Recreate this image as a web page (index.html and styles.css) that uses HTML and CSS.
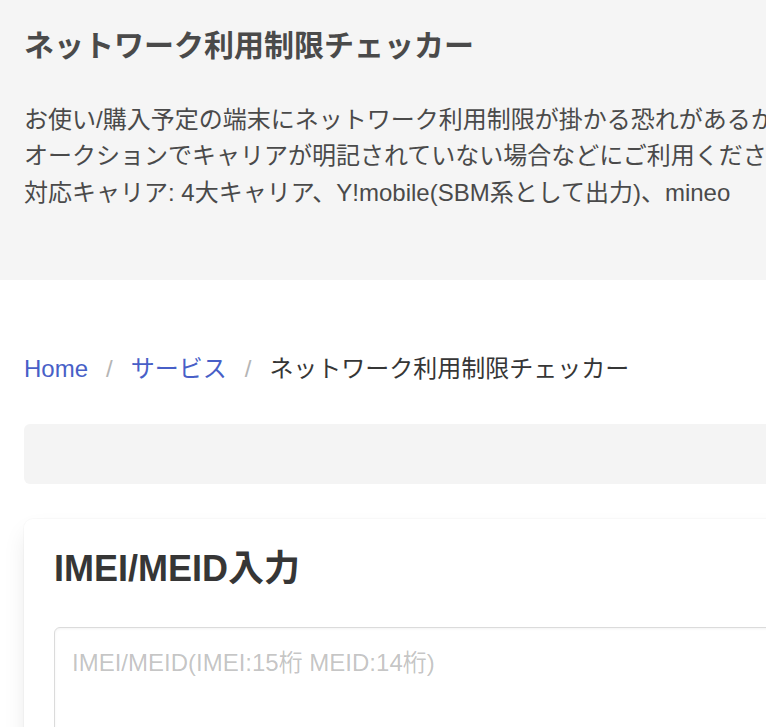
FILE: index.html
```html
<!DOCTYPE html>
<html lang="ja">
<head>
  <meta charset="UTF-8">
  <title>ネットワーク利用制限チェッカー</title>
  <link rel="stylesheet" href="styles.css">
</head>
<body>
  <section class="hero">
    <div class="hero-body">
      <h1 class="hero-title">ネットワーク利用制限チェッカー</h1>
      <p class="hero-text">
        お使い/購入予定の端末にネットワーク利用制限が掛かる恐れがあるかどうかを確認できます。<br>
        オークションでキャリアが明記されていない場合などにご利用ください。<br>
        対応キャリア: 4大キャリア、Y!mobile(SBM系として出力)、mineo
      </p>
    </div>
  </section>

  <section class="section">
    <nav class="breadcrumb">
      <ul>
        <li><a href="#">Home</a></li>
        <li><a href="#">サービス</a></li>
        <li class="is-active"><span>ネットワーク利用制限チェッカー</span></li>
      </ul>
    </nav>

    <div class="ad-slot"></div>

    <div class="box">
      <h2 class="box-title">IMEI/MEID入力</h2>
      <textarea class="textarea" placeholder="IMEI/MEID(IMEI:15桁 MEID:14桁)"></textarea>
    </div>
  </section>
</body>
</html>
```

FILE: styles.css
```css
html, body {
  margin: 0;
  overflow: hidden;
}
body {
  width: 1200px;
  font-family: "Liberation Sans", "Noto Sans CJK JP", sans-serif;
  font-size: 24px;
  line-height: 1.5;
  color: #4a4a4a;
  background: #ffffff;
}
.hero {
  background-color: #f5f5f5;
  height: 280px;
}
.hero-body {
  padding: 29px 24px 24px;
}
.hero-title {
  margin: 0 0 39px;
  font-size: 30px;
  line-height: 1.125;
  font-weight: bold;
  color: #4a4a4a;
}
.hero-text {
  margin: 0;
  line-height: 36.5px;
  color: #4a4a4a;
  white-space: nowrap;
}
.section {
  padding: 71px 24px 40px;
}
.breadcrumb ul {
  list-style: none;
  margin: 0 0 37px;
  padding: 0;
  display: flex;
  align-items: center;
}
.breadcrumb li {
  display: flex;
  align-items: center;
}
.breadcrumb li + li::before {
  content: "/";
  color: #b5b5b5;
}
.breadcrumb a,
.breadcrumb span {
  padding: 0 18px;
  color: #485fc7;
  text-decoration: none;
}
.breadcrumb li:first-child a {
  padding-left: 0;
}
.breadcrumb .is-active span {
  color: #363636;
}
.ad-slot {
  height: 60px;
  background: #f4f4f4;
  border-radius: 6px;
  margin-bottom: 35px;
}
.box {
  background: #ffffff;
  border-radius: 9px;
  padding: 30px;
  box-shadow: 0 12px 24px -3px rgba(10, 10, 10, 0.1), 0 0 0 1px rgba(10, 10, 10, 0.02);
}
.box-title {
  margin: 0 0 37px;
  font-size: 36px;
  line-height: 1.125;
  font-weight: bold;
  color: #363636;
}
.textarea {
  display: block;
  box-sizing: border-box;
  width: 100%;
  height: 180px;
  padding: 17px;
  border: 1px solid #dbdbdb;
  border-radius: 6px;
  font-family: inherit;
  font-size: 24px;
  line-height: 1.5;
  color: #363636;
  resize: none;
  box-shadow: inset 0 1px 3px rgba(10, 10, 10, 0.05);
}
.textarea::placeholder {
  color: rgba(54, 54, 54, 0.3);
}
```
